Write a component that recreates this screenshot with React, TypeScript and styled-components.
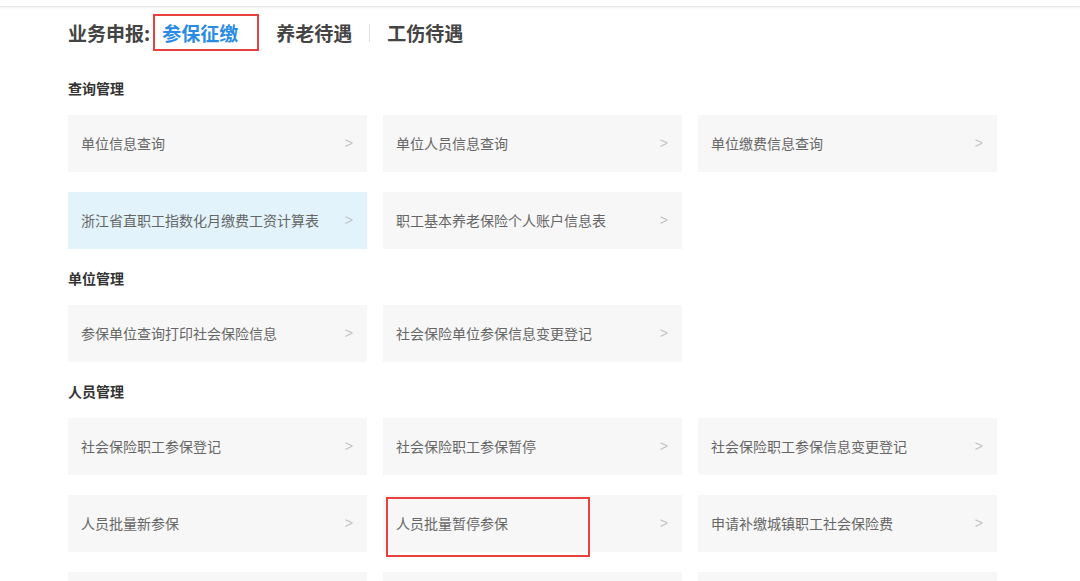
import React from "react";
import styled, { createGlobalStyle } from "styled-components";

const GlobalStyle = createGlobalStyle`
  html, body {
    margin: 0;
    padding: 0;
    background: #ffffff;
    overflow: hidden;
    font-family: "Noto Sans CJK SC", "Noto Sans", "Liberation Sans", sans-serif;
  }
  * { box-sizing: border-box; }
`;

const TopBar = styled.div`
  height: 7px;
  border-bottom: 1px solid #e4e4e4;
  box-shadow: 0 1px 3px rgba(0, 0, 0, 0.05);
`;

const Page = styled.div`
  padding-left: 68px;
  width: 998px;
`;

const TabsRow = styled.div`
  display: flex;
  align-items: center;
  margin-top: 14px;
  height: 24px;
  font-size: 19px;
  font-weight: 700;
  line-height: 24px;
`;

const TabsLabel = styled.span`
  color: #444;
  margin-right: 12px;
`;

const Tab = styled.span<{ $active?: boolean }>`
  position: relative;
  color: ${(p) => (p.$active ? "#2a8be4" : "#444")};
`;

const TabGap = styled.span<{ $w: number }>`
  display: inline-block;
  width: ${(p) => p.$w}px;
`;

const TabDivider = styled.span`
  display: inline-block;
  width: 1px;
  height: 18px;
  background: #e0e0e0;
  margin: 0 17px;
`;

const Annotation = styled.span<{ $l: number; $t: number; $w: number; $h: number }>`
  position: absolute;
  left: ${(p) => p.$l}px;
  top: ${(p) => p.$t}px;
  width: ${(p) => p.$w}px;
  height: ${(p) => p.$h}px;
  border: 2px solid #e8403d;
  pointer-events: none;
`;

const Section = styled.section<{ $first?: boolean }>`
  margin-top: ${(p) => (p.$first ? 34 : 20)}px;
`;

const SectionTitle = styled.h3`
  margin: 0 0 18px;
  font-size: 14px;
  line-height: 18px;
  font-weight: 700;
  color: #333;
`;

const Grid = styled.div`
  display: grid;
  grid-template-columns: repeat(3, 299px);
  column-gap: 16px;
  row-gap: 20px;
`;

const Card = styled.div<{ $highlight?: boolean }>`
  position: relative;
  height: 57px;
  display: flex;
  align-items: center;
  justify-content: space-between;
  padding: 0 14px 2px 13px;
  background: ${(p) => (p.$highlight ? "#e2f3fb" : "#f7f7f7")};
  font-size: 14px;
  color: #666;
`;

const CardText = styled.span`
  white-space: nowrap;
`;

const Arrow = styled.span`
  color: #c4c4c4;
  font-family: "Liberation Sans", sans-serif;
  font-size: 14px;
`;

type Item = { text: string; highlight?: boolean; marked?: boolean };

const sections: { title: string; items: Item[] }[] = [
  {
    title: "查询管理",
    items: [
      { text: "单位信息查询" },
      { text: "单位人员信息查询" },
      { text: "单位缴费信息查询" },
      { text: "浙江省直职工指数化月缴费工资计算表", highlight: true },
      { text: "职工基本养老保险个人账户信息表" },
    ],
  },
  {
    title: "单位管理",
    items: [
      { text: "参保单位查询打印社会保险信息" },
      { text: "社会保险单位参保信息变更登记" },
    ],
  },
  {
    title: "人员管理",
    items: [
      { text: "社会保险职工参保登记" },
      { text: "社会保险职工参保暂停" },
      { text: "社会保险职工参保信息变更登记" },
      { text: "人员批量新参保" },
      { text: "人员批量暂停参保", marked: true },
      { text: "申请补缴城镇职工社会保险费" },
      { text: "" },
      { text: "" },
      { text: "" },
    ],
  },
];

export default function App() {
  return (
    <>
      <GlobalStyle />
      <TopBar />
      <Page>
        <TabsRow>
          <TabsLabel>业务申报:</TabsLabel>
          <Tab $active>
            参保征缴
            <Annotation $l={-9} $t={-7} $w={106} $h={37} />
          </Tab>
          <TabGap $w={38} />
          <Tab>养老待遇</Tab>
          <TabDivider />
          <Tab>工伤待遇</Tab>
        </TabsRow>

        {sections.map((s, i) => (
          <Section key={s.title} $first={i === 0}>
            <SectionTitle>{s.title}</SectionTitle>
            <Grid>
              {s.items.map((it, j) => (
                <Card key={`${it.text}-${j}`} $highlight={it.highlight}>
                  {it.text && <CardText>{it.text}</CardText>}
                  {it.text && <Arrow>&gt;</Arrow>}
                  {it.marked && <Annotation $l={3} $t={2} $w={204} $h={60} />}
                </Card>
              ))}
            </Grid>
          </Section>
        ))}
      </Page>
    </>
  );
}
